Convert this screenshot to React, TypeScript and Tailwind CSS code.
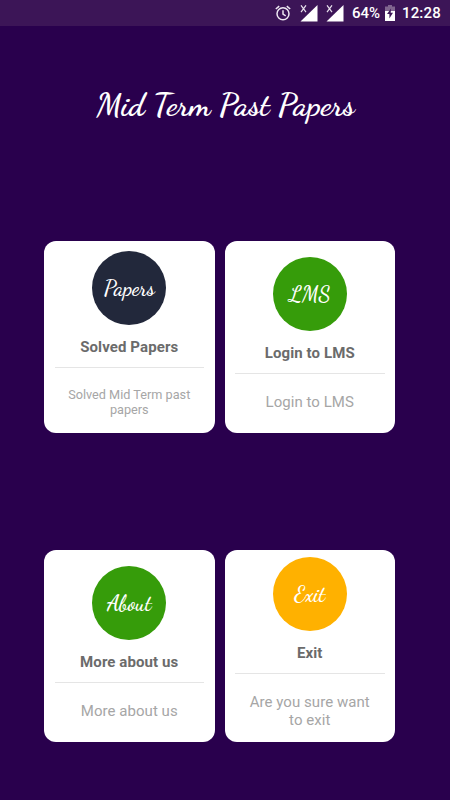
import clsx from 'clsx'

interface MenuCardProps {
  badge: string
  title: string
  description: string
  color: string
  descriptionClass?: string
}

const cards: MenuCardProps[] = [
  {
    badge: 'Papers',
    title: 'Solved Papers',
    description: 'Solved Mid Term past papers',
    color: 'bg-[#22283b]',
    descriptionClass: 'text-[12.7px] leading-[15px]',
  },
  {
    badge: 'LMS',
    title: 'Login to LMS',
    description: 'Login to LMS',
    color: 'bg-[#369c0a]',
  },
  {
    badge: 'About',
    title: 'More about us',
    description: 'More about us',
    color: 'bg-[#369c0a]',
  },
  {
    badge: 'Exit',
    title: 'Exit',
    description: 'Are you sure want to exit',
    color: 'bg-[#ffb100]',
  },
]

function SignalIcon() {
  return (
    <svg className="h-[17px] w-[18px]" viewBox="0 0 18 17" fill="none">
      <path d="M17.5 0v16.5H.5z" fill="#fff" />
      <path d="M1 .3l5 6.9M6 .3L1 7.2" stroke="#e6deeb" strokeWidth="1.2" />
    </svg>
  )
}

function AlarmIcon() {
  return (
    <svg className="h-4 w-4" viewBox="0 0 16 16" fill="none" stroke="#eee8f2" strokeWidth="1.5">
      <circle cx="8" cy="8.8" r="6" />
      <path d="M8 5.2v4l2.7 1.7M.8 4L4.2 1.1M11.8 1.1L15.2 4" />
    </svg>
  )
}

function BatteryIcon() {
  return (
    <svg className="h-4 w-[10px]" viewBox="0 0 10 16">
      <path d="M3 0h4v1.5h3V7H0V1.5h3z" fill="#80658f" />
      <path d="M0 6h10v10H0z" fill="#fff" />
      <path d="M6 3.5L2 9h2.4v4.5L8 7.8H5.7z" fill="#3c1557" />
    </svg>
  )
}

function StatusBar() {
  return (
    <div className="flex h-[26px] items-center justify-end bg-[#3c1557] pr-[9px] text-[15px] font-medium text-white">
      <AlarmIcon />
      <div className="mr-[0.5px] ml-[8.5px] flex gap-2">
        <SignalIcon />
        <SignalIcon />
      </div>
      <span className="ml-2 w-[29px] pt-px whitespace-nowrap">64%</span>
      <span className="ml-1">
        <BatteryIcon />
      </span>
      <span className="ml-[7px] w-[39px] pt-px whitespace-nowrap tracking-[0.15px]">12:28</span>
    </div>
  )
}

function MenuCard({ badge, title, description, color, descriptionClass }: MenuCardProps) {
  return (
    <div className="flex h-48 flex-col items-center justify-center rounded-[12px] bg-white px-[10.5px]">
      <div className={clsx('flex size-[74px] shrink-0 items-center justify-center rounded-full', color)}>
        <span className="pt-px font-['Dancing_Script',cursive] text-[21.5px] leading-none font-semibold text-white">
          {badge}
        </span>
      </div>
      <h2 className="mt-3 text-[15px] leading-5 font-bold tracking-[0.1px] text-[#6b6b6b]">{title}</h2>
      <div className="mt-[10px] h-px w-full shrink-0 bg-[#e5e5e5]" />
      <p
        className={clsx(
          'mt-[19px] mb-[6px] w-[130px] text-center text-[#a6a6a6]',
          descriptionClass ?? 'text-[15px] leading-[18px] tracking-[0.05px]'
        )}
      >
        {description}
      </p>
    </div>
  )
}

export default function App() {
  return (
    <div className="h-[800px] w-[450px] overflow-hidden bg-[#29004d] font-['Roboto',sans-serif]">
      <StatusBar />
      <h1 className="mt-[59px] h-10 pl-px text-center font-['Dancing_Script',cursive] text-[32px] leading-10 font-bold whitespace-nowrap text-white">
        Mid Term Past Papers
      </h1>
      <div className="mt-[116px] ml-11 grid w-[351px] grid-cols-2 gap-x-[10px] gap-y-[117px]">
        {cards.map((card) => (
          <MenuCard key={card.badge} {...card} />
        ))}
      </div>
    </div>
  )
}
